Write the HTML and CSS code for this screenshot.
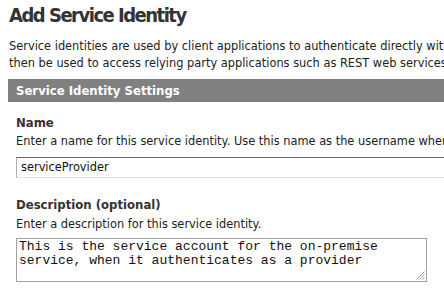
FILE: index.html
```html
<!DOCTYPE html>
<html>
<head>
<meta charset="utf-8">
<link rel="stylesheet" href="styles.css">
</head>
<body>
<div class="page">
  <h1 class="title">Add Service Identity</h1>
  <p class="intro">Service identities are used by client applications to authenticate directly with ACS. These identities can<br>then be used to access relying party applications such as REST web services.</p>
  <div class="section">
    <div class="section-bar">Service Identity Settings</div>
    <div class="section-body">
      <div class="field">
        <div class="label">Name</div>
        <div class="help">Enter a name for this service identity. Use this name as the username when authenticating.</div>
        <div class="input">serviceProvider</div>
      </div>
      <div class="field">
        <div class="label">Description (optional)</div>
        <div class="help">Enter a description for this service identity.</div>
        <div class="textarea">This is the service account for the on-premise
service, when it authenticates as a provider<span class="grip"><svg width="10" height="10" viewBox="0 0 10 10"><path d="M9.5 1.5 L1.5 9.5 M9.5 4.5 L4.5 9.5 M9.5 7.5 L7.5 9.5" stroke="#a0a0a0" stroke-width="1" fill="none"/></svg></span></div>
      </div>
    </div>
  </div>
</div>
</body>
</html>
```
FILE: styles.css
```css
html, body { margin: 0; padding: 0; background: #fff; }
body { overflow: hidden; width: 444px; height: 290px; }
.page {
  padding: 0 0 0 8px;
  font-family: "DejaVu Sans", Verdana, sans-serif;
  color: #333;
  white-space: nowrap;
}
.title {
  margin: 0;
  padding: 3px 0 0 1px;
  font-family: "DejaVu Sans Condensed", "DejaVu Sans", sans-serif;
  font-size: 20px;
  letter-spacing: -1.5px;
  line-height: 25px;
  font-weight: bold;
  color: #333;
}
.intro {
  margin: 10px 0 0 1px;
  font-size: 11.4px;
  line-height: 17px;
  color: #222;
}
.section { margin-top: 7px; width: 600px; }
.section-bar {
  background: #808080;
  color: #fff;
  font-family: "DejaVu Sans Condensed", "DejaVu Sans", sans-serif;
  font-weight: bold;
  font-size: 13px;
  line-height: 23px;
  padding-left: 8px;
}
.section-body { padding: 13px 0 0 8px; }
.field { margin-bottom: 19px; }
.label {
  font-family: "DejaVu Sans Condensed", "DejaVu Sans", sans-serif;
  font-weight: bold;
  font-size: 13px;
  line-height: 16px;
  color: #333;
}
.help {
  font-size: 11.4px;
  line-height: 17px;
  margin-top: 2px;
  color: #222;
}
.field + .field .help { margin-top: 3px; }
.input {
  margin-top: 7px;
  height: 19px;
  width: 500px;
  border: 1px solid #b0b0b0;
  border-top-color: #6a6a6a;
  border-bottom-color: #e0e0e0;
  font-size: 11.4px;
  line-height: 19px;
  padding: 0 4px;
  color: #111;
}
.field + .field .textarea { margin-top: 5px; }
.textarea {
  position: relative;
  width: 405px;
  height: 41px;
  border: 1px solid #a0a0a0;
  padding: 1px 2px 0 2px;
  font-family: "Liberation Mono", "Courier New", monospace;
  font-size: 13px;
  line-height: 14px;
  white-space: pre;
  color: #111;
}
.grip { position: absolute; right: 1px; bottom: 1px; width: 10px; height: 10px; line-height: 0; }
```
